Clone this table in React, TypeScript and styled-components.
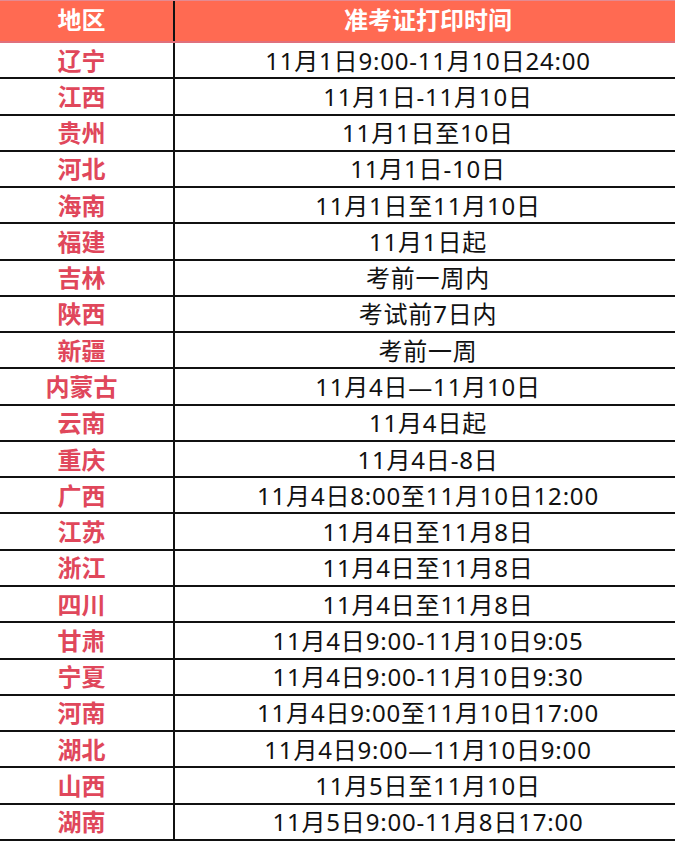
import React from "react";
import styled, { createGlobalStyle } from "styled-components";

const Global = createGlobalStyle`
  html, body { margin: 0; padding: 0; background: #ffffff; }
  body { font-family: "Noto Sans", "Noto Sans CJK SC", sans-serif; }
`;

const Table = styled.div`
  width: 675px;
  height: 841px;
  display: flex;
  flex-direction: column;
  background: #ffffff;
`;

const HeaderRow = styled.div`
  flex: 0 0 43px;
  display: grid;
  grid-template-columns: 175px 1fr;
  background: #ff6a52;
  border-top: 1px solid #e48a92;
  border-bottom: 2px solid #e0707c;
  box-sizing: border-box;
`;

const HeaderCell = styled.div<{ $divider?: boolean }>`
  display: flex;
  align-items: center;
  justify-content: center;
  color: #ffffff;
  font-family: "Noto Sans", "Noto Sans CJK SC", sans-serif;
  font-weight: 700;
  font-size: 24px;
  line-height: 1;
  border-right: ${(p) => (p.$divider ? "2px solid #111111" : "none")};
  padding: ${(p) => (p.$divider ? "0 10px 2px 0" : "0 0 2px 6px")};
`;

const Row = styled.div`
  flex: 1 1 0;
  min-height: 0;
  display: grid;
  grid-template-columns: 175px 1fr;
  border-bottom: 2px solid #111111;
  box-sizing: border-box;
`;

const RegionCell = styled.div`
  display: flex;
  align-items: center;
  justify-content: center;
  color: #e0475b;
  font-family: "Noto Sans", "Noto Sans CJK SC", sans-serif;
  font-weight: 700;
  font-size: 24px;
  line-height: 1;
  border-right: 2px solid #111111;
  padding: 1px 10px 0 0;
`;

const TimeCell = styled.div`
  display: flex;
  align-items: center;
  justify-content: center;
  color: #111111;
  font-family: "Noto Sans", "Noto Sans CJK SC", sans-serif;
  font-weight: 400;
  font-size: 24px;
  letter-spacing: 0.8px;
  line-height: 1;
  padding: 1px 0 0 6px;
`;

const rows: [string, string][] = [
  ["辽宁", "11月1日9:00-11月10日24:00"],
  ["江西", "11月1日-11月10日"],
  ["贵州", "11月1日至10日"],
  ["河北", "11月1日-10日"],
  ["海南", "11月1日至11月10日"],
  ["福建", "11月1日起"],
  ["吉林", "考前一周内"],
  ["陕西", "考试前7日内"],
  ["新疆", "考前一周"],
  ["内蒙古", "11月4日—11月10日"],
  ["云南", "11月4日起"],
  ["重庆", "11月4日-8日"],
  ["广西", "11月4日8:00至11月10日12:00"],
  ["江苏", "11月4日至11月8日"],
  ["浙江", "11月4日至11月8日"],
  ["四川", "11月4日至11月8日"],
  ["甘肃", "11月4日9:00-11月10日9:05"],
  ["宁夏", "11月4日9:00-11月10日9:30"],
  ["河南", "11月4日9:00至11月10日17:00"],
  ["湖北", "11月4日9:00—11月10日9:00"],
  ["山西", "11月5日至11月10日"],
  ["湖南", "11月5日9:00-11月8日17:00"],
];

export default function App() {
  return (
    <>
      <Global />
      <Table>
        <HeaderRow>
          <HeaderCell $divider>地区</HeaderCell>
          <HeaderCell>准考证打印时间</HeaderCell>
        </HeaderRow>
        {rows.map(([region, time]) => (
          <Row key={region}>
            <RegionCell>{region}</RegionCell>
            <TimeCell>{time}</TimeCell>
          </Row>
        ))}
      </Table>
    </>
  );
}
